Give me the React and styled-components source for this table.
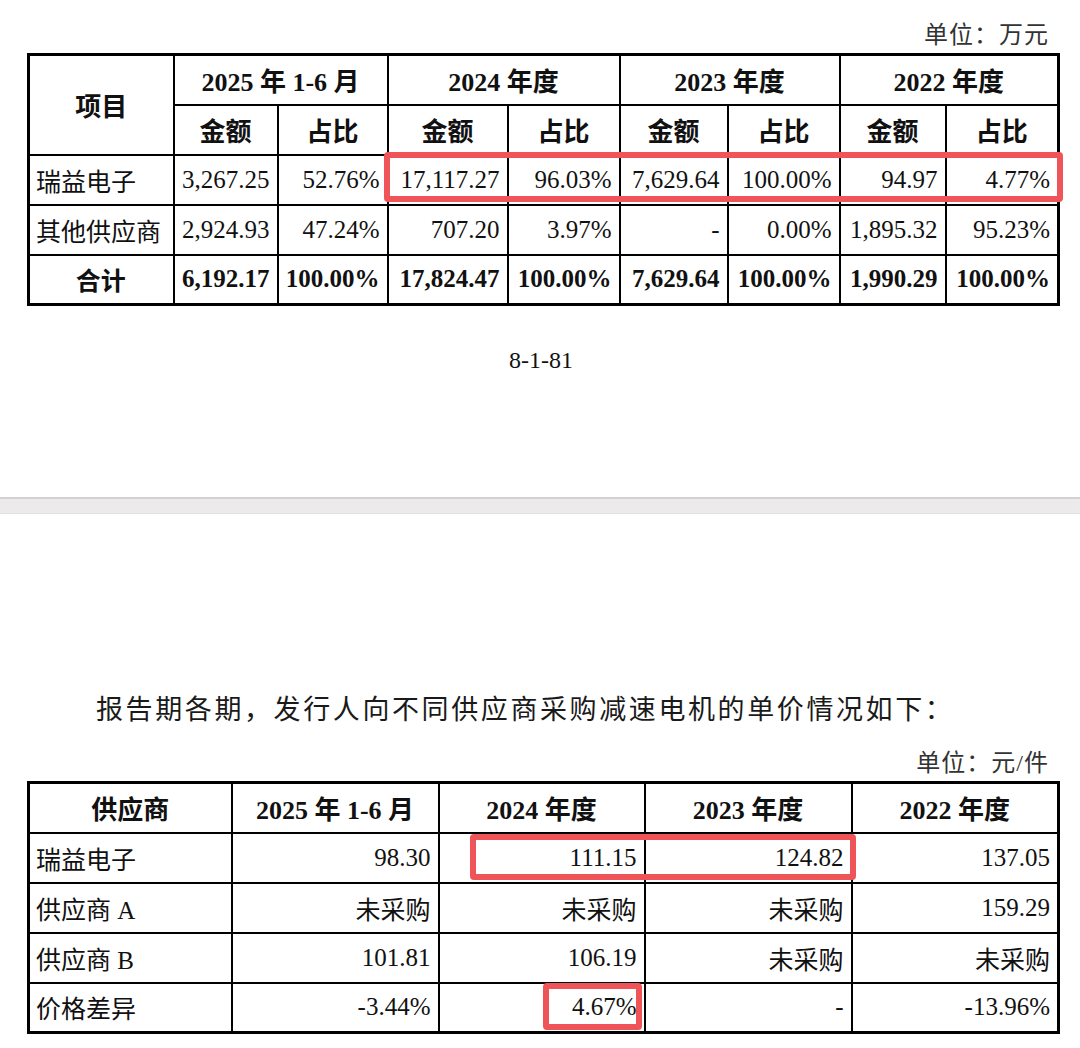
import React from "react";
import styled, { createGlobalStyle } from "styled-components";

const GlobalStyle = createGlobalStyle`
  html, body {
    margin: 0;
    padding: 0;
    background: #fff;
  }
  body {
    font-family: "Liberation Serif", "Noto Sans CJK SC", serif;
    color: #111;
  }
`;

const Sheet = styled.section`
  box-sizing: border-box;
  width: 1080px;
  height: ${(p) => p.$height}px;
  padding: ${(p) => p.$top}px 23px 0 27px;
  display: flex;
  flex-direction: column;
  background: #fff;
`;

const Band = styled.div`
  box-sizing: border-box;
  width: 1080px;
  height: 17px;
  background: #eceaea;
  border-top: 2px solid #d3d2d2;
  border-bottom: 1px solid #e2e0e0;
`;

const UnitLine = styled.div`
  height: 30px;
  line-height: 30px;
  text-align: right;
  padding-right: 8px;
  font-size: 24px;
  letter-spacing: 1px;
  color: #333;
  margin-bottom: 3px;
`;

const Intro = styled.p`
  margin: 0 0 18px 69px;
  height: 40px;
  line-height: 40px;
  font-size: 27px;
  letter-spacing: 2.6px;
  color: #1a1a1a;
`;

const PageNumber = styled.div`
  margin-top: 39px;
  height: 30px;
  line-height: 30px;
  text-align: center;
  font-size: 24px;
  color: #111;
  padding-right: 2px;
`;

const TableFrame = styled.div`
  position: relative;
  width: 1030px;
`;

const Grid = styled.table`
  width: 1030px;
  table-layout: fixed;
  border-collapse: collapse;
  border: 3px solid #000;
`;

const Row = styled.tr`
  height: 50px;
`;

const HeadCell = styled.th`
  border: 2px solid #000;
  padding: 0;
  font-size: 26px;
  font-weight: 700;
  text-align: center;
  vertical-align: middle;
  white-space: nowrap;
`;

const Cell = styled.td`
  border: 2px solid #000;
  padding: 0 7px 0 6px;
  font-size: 25px;
  font-weight: ${(p) => (p.$bold ? 700 : 400)};
  text-align: ${(p) => p.$align || "right"};
  vertical-align: middle;
  white-space: nowrap;
  overflow: visible;
`;

const Highlight = styled.div`
  position: absolute;
  left: ${(p) => p.$left}px;
  top: ${(p) => p.$top}px;
  width: ${(p) => p.$w}px;
  height: ${(p) => p.$h}px;
  box-sizing: border-box;
  border: 6px solid #ef5459;
  border-radius: 4px;
  pointer-events: none;
`;

const shareRows = [
  { name: "瑞益电子", values: ["3,267.25", "52.76%", "17,117.27", "96.03%", "7,629.64", "100.00%", "94.97", "4.77%"] },
  { name: "其他供应商", values: ["2,924.93", "47.24%", "707.20", "3.97%", "-", "0.00%", "1,895.32", "95.23%"] },
];
const shareTotal = ["6,192.17", "100.00%", "17,824.47", "100.00%", "7,629.64", "100.00%", "1,990.29", "100.00%"];
const shareCols = [145, 104, 110, 120, 112, 108, 112, 106, 113];
const periods = ["2025 年 1-6 月", "2024 年度", "2023 年度", "2022 年度"];

const priceRows = [
  { name: "瑞益电子", values: ["98.30", "111.15", "124.82", "137.05"] },
  { name: "供应商 A", values: ["未采购", "未采购", "未采购", "159.29"] },
  { name: "供应商 B", values: ["101.81", "106.19", "未采购", "未采购"] },
  { name: "价格差异", values: ["-3.44%", "4.67%", "-", "-13.96%"] },
];
const priceCols = [203, 207, 206, 207, 207];

function ShareTable() {
  return (
    <TableFrame>
      <Grid>
        <colgroup>
          {shareCols.map((w, i) => (
            <col key={i} style={{ width: w }} />
          ))}
        </colgroup>
        <thead>
          <Row>
            <HeadCell rowSpan={2}>项目</HeadCell>
            {periods.map((p) => (
              <HeadCell key={p} colSpan={2}>{p}</HeadCell>
            ))}
          </Row>
          <Row>
            {periods.map((p) => (
              <React.Fragment key={p}>
                <HeadCell>金额</HeadCell>
                <HeadCell>占比</HeadCell>
              </React.Fragment>
            ))}
          </Row>
        </thead>
        <tbody>
          {shareRows.map((r) => (
            <Row key={r.name}>
              <Cell $align="left">{r.name}</Cell>
              {r.values.map((v, i) => (
                <Cell key={i}>{v}</Cell>
              ))}
            </Row>
          ))}
          <Row>
            <Cell $align="center" $bold>合计</Cell>
            {shareTotal.map((v, i) => (
              <Cell key={i} $bold>{v}</Cell>
            ))}
          </Row>
        </tbody>
      </Grid>
      <Highlight $left={357} $top={99} $w={679} $h={50} />
    </TableFrame>
  );
}

function PriceTable() {
  return (
    <TableFrame>
      <Grid>
        <colgroup>
          {priceCols.map((w, i) => (
            <col key={i} style={{ width: w }} />
          ))}
        </colgroup>
        <thead>
          <Row>
            <HeadCell>供应商</HeadCell>
            {periods.map((p) => (
              <HeadCell key={p}>{p}</HeadCell>
            ))}
          </Row>
        </thead>
        <tbody>
          {priceRows.map((r) => (
            <Row key={r.name}>
              <Cell $align="left">{r.name}</Cell>
              {r.values.map((v, i) => (
                <Cell key={i}>{v}</Cell>
              ))}
            </Row>
          ))}
        </tbody>
      </Grid>
      <Highlight $left={443} $top={53} $w={386} $h={46} />
      <Highlight $left={516} $top={202} $w={99} $h={47} />
    </TableFrame>
  );
}

export default function App() {
  return (
    <>
      <GlobalStyle />
      <Sheet $height={497} $top={20}>
        <UnitLine>单位：万元</UnitLine>
        <ShareTable />
        <PageNumber>8-1-81</PageNumber>
      </Sheet>
      <Band />
      <Sheet $height={537} $top={176}>
        <Intro>报告期各期，发行人向不同供应商采购减速电机的单价情况如下：</Intro>
        <UnitLine>单位：元/件</UnitLine>
        <PriceTable />
      </Sheet>
    </>
  );
}
